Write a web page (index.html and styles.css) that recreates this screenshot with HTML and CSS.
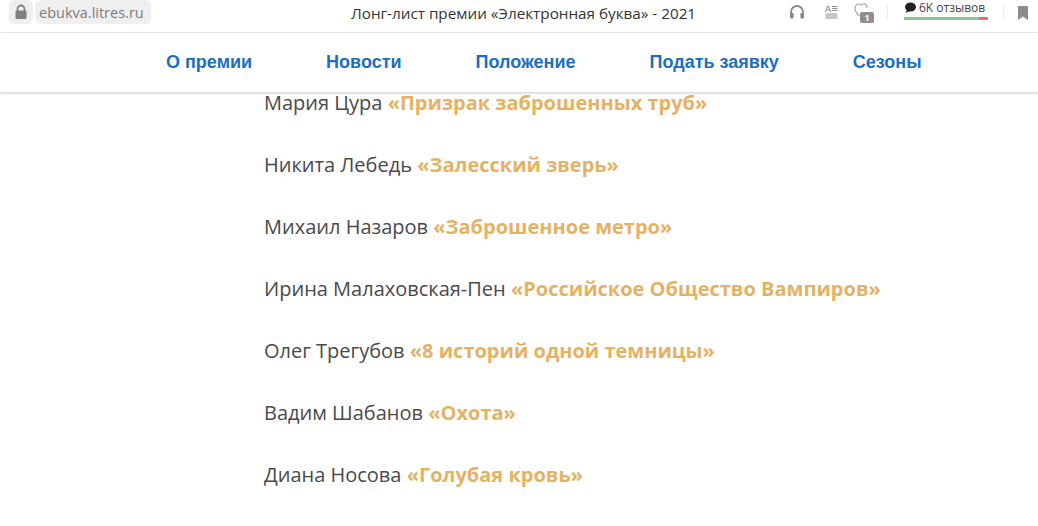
FILE: index.html
```html
<!DOCTYPE html>
<html lang="en">
<head>
    <meta charset="UTF-8">
    <meta name="viewport" content="width=device-width, initial-scale=1.0">
    <title>Лонг-лист премии</title>
    <link rel="stylesheet" href="styles.css">
</head>
<body>
    <div class="topbar">
        <div class="address">
            <span class="lock">
                <svg width="14" height="16" viewBox="0 0 14 16"><path d="M3.500 7V5a3.500 3.500 0 0 1 7 0v2" fill="none" stroke="#808080" stroke-width="1.800"/><rect x="1.500" y="6.500" width="11" height="8.500" rx="1.200" fill="#808080"/></svg>
            </span>
            <span class="domain">ebukva.litres.ru</span>
        </div>
        <div class="page-title">Лонг-лист премии «Электронная буква» - 2021</div>
        <div class="tools">
            <svg class="tool-headphones" width="16" height="14" viewBox="0 0 16 14"><path d="M2 9V7a6 6 0 0 1 12 0v2" fill="none" stroke="#8a8a8a" stroke-width="1.800"/><rect x="1" y="8" width="3.600" height="5.500" rx="1" fill="#8a8a8a"/><rect x="11.400" y="8" width="3.600" height="5.500" rx="1" fill="#8a8a8a"/></svg>
            <svg class="tool-text" width="13" height="15" viewBox="0 0 13 15"><path d="M.5 7l2.300-6h.6L5.700 7M1.500 5h3.200" fill="none" stroke="#8f8f8f" stroke-width="1"/><path d="M7 1.500h5.500M7 3.500h5.500M7 5.500h5.500M.5 9h12M.5 11h12M.5 13h12" stroke="#8f8f8f" stroke-width="1"/></svg>
            <span class="tool-shelf">
                <svg width="22" height="22" viewBox="0 0 22 22"><path d="M5.500 15C2.500 12.500 1 10 1 7c0-2.500 2-4 3.500-4C6 3 7 3.500 7.500 4 8.500 3 10 2.500 11 3c1.300.5 2 1.800 2 4" fill="none" stroke="#a5a5a5" stroke-width="1.200"/></svg>
                <span class="shelf-badge">1</span>
            </span>
            <span class="sep"></span>
            <div class="reviews">
                <div class="reviews-label">
                    <svg width="13" height="12" viewBox="0 0 13 12"><ellipse cx="6.500" cy="5" rx="5.500" ry="4.600" fill="#222"/><path d="M3 8l-1.500 3L6 9z" fill="#222"/></svg>
                    <span>6K отзывов</span>
                </div>
                <div class="reviews-bar"><span class="bar-good"></span><span class="bar-bad"></span></div>
            </div>
            <span class="sep"></span>
            <svg class="tool-bookmark" width="10" height="14" viewBox="0 0 10 14"><path d="M0 0h10v14L5 10.500 0 14z" fill="#8c8c8c"/></svg>
        </div>
    </div>

    <nav class="menu">
        <a href="#">О премии</a>
        <a href="#">Новости</a>
        <a href="#">Положение</a>
        <a href="#">Подать заявку</a>
        <a href="#">Сезоны</a>
    </nav>

    <main class="list">
        <p>Мария Цура <b>«Призрак заброшенных труб»</b></p>
        <p>Никита Лебедь <b>«Залесский зверь»</b></p>
        <p>Михаил Назаров <b>«Заброшенное метро»</b></p>
        <p>Ирина Малаховская-Пен <b>«Российское Общество Вампиров»</b></p>
        <p>Олег Трегубов <b>«8 историй одной темницы»</b></p>
        <p>Вадим Шабанов <b>«Охота»</b></p>
        <p>Диана Носова <b>«Голубая кровь»</b></p>
    </main>
</body>
</html>
```

FILE: styles.css
```css
html, body {
    margin: 0;
    height: 526px;
    overflow: hidden;
    background: #fff;
}

body {
    font-family: "Open Sans", sans-serif;
    color: #4a4a4a;
}

.topbar {
    height: 32px;
    display: flex;
    align-items: flex-start;
    border-bottom: 1px solid #e6e6e6;
    box-sizing: content-box;
    position: relative;
}

.address {
    display: flex;
    gap: 2px;
    margin-left: 9px;
    height: 24px;
}

.lock, .domain {
    background: #efefef;
    border-radius: 6px;
    height: 24px;
    display: flex;
    align-items: center;
}

.lock {
    width: 24px;
    justify-content: center;
}

.domain {
    padding: 0 7px 0 4px;
    font-size: 14.500px;
    color: #7d7d7d;
}

.page-title {
    position: absolute;
    left: 351px;
    top: 3px;
    font-size: 15.250px;
    line-height: 20px;
    color: #333;
}

.tools {
    margin-left: auto;
    display: flex;
    align-items: flex-start;
    padding-right: 10px;
}

.tool-headphones {
    margin: 5px 0 0 18px;
}

.tool-text {
    margin: 5px 0 0 20px;
}

.tool-shelf {
    position: relative;
    width: 22px;
    height: 22px;
    margin: 1px 0 0 16px;
}

.shelf-badge {
    position: absolute;
    left: 6px;
    top: 11px;
    width: 14px;
    height: 11px;
    background: #8f8f8f;
    border-radius: 2px;
    color: #fff;
    font-size: 9px;
    font-weight: 700;
    line-height: 11px;
    text-align: center;
}

.sep {
    width: 1px;
    height: 16px;
    margin: 4px 16px 0 11px;
    background: #ececec;
}

.reviews + .sep {
    margin: 4px 14px 0 15px;
}

.reviews {
    width: 84px;
}

.reviews-label {
    display: flex;
    align-items: center;
    gap: 2px;
    height: 15px;
    font-size: 12px;
    color: #444;
    white-space: nowrap;
}

.reviews-bar {
    display: flex;
    height: 3px;
    margin-top: 2px;
}

.bar-good {
    flex: 1;
    background: #8dc39a;
}

.bar-bad {
    width: 9px;
    background: #d9756b;
}

.tool-bookmark {
    margin-top: 6px;
}

.menu {
    height: 59px;
    display: flex;
    gap: 74px;
    padding-left: 166px;
    align-items: center;
    border-bottom: 1px solid #dcdcdc;
    box-shadow: 0 1px 2px rgba(0, 0, 0, 0.12);
    position: relative;
    background: #fff;
}

.menu a {
    font-family: "Liberation Sans", sans-serif;
    font-size: 18px;
    font-weight: 700;
    color: #1b6ec2;
    text-decoration: none;
}

.list {
    padding-left: 264px;
    margin-top: -4px;
}

.list p {
    margin: 0 0 34px;
    font-size: 20px;
    line-height: 28px;
}

.list b {
    color: #e5b264;
    font-weight: 700;
}
```
